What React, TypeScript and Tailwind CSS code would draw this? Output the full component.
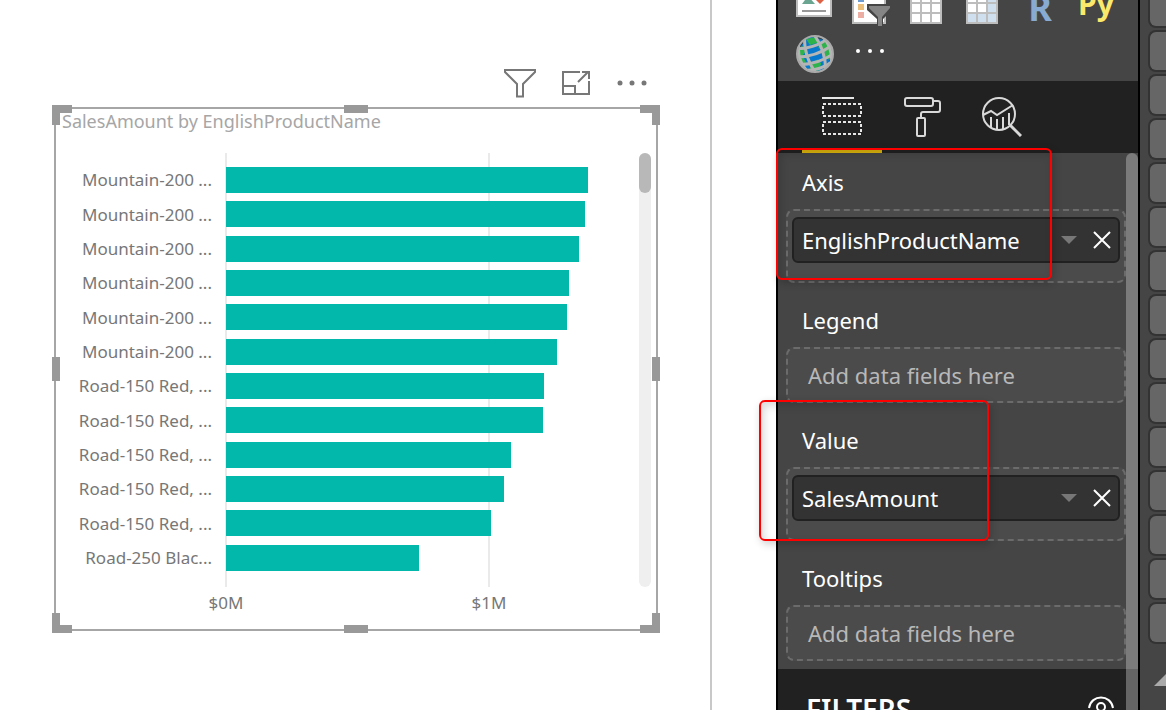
import React from 'react';
import clsx from 'clsx';

const AXIS_MAX = 1.57;

const SALES = [
  { name: 'Mountain-200 ...', amount: 1.376 },
  { name: 'Mountain-200 ...', amount: 1.366 },
  { name: 'Mountain-200 ...', amount: 1.342 },
  { name: 'Mountain-200 ...', amount: 1.304 },
  { name: 'Mountain-200 ...', amount: 1.297 },
  { name: 'Mountain-200 ...', amount: 1.259 },
  { name: 'Road-150 Red, ...', amount: 1.209 },
  { name: 'Road-150 Red, ...', amount: 1.205 },
  { name: 'Road-150 Red, ...', amount: 1.083 },
  { name: 'Road-150 Red, ...', amount: 1.057 },
  { name: 'Road-150 Red, ...', amount: 1.008 },
  { name: 'Road-250 Blac...', amount: 0.735 },
];

const TICKS = [
  { label: '$0M', value: 0 },
  { label: '$1M', value: 1 },
];

const FIELD_CARDS = Array.from({ length: 15 }, (_, i) => i);

const percent = (value: number) => `${(value / AXIS_MAX) * 100}%`;

/* Visual toolbar */

function VisualToolbar() {
  return (
    <div className="flex justify-end gap-6 pr-[10px] mb-2">
      <button type="button" aria-label="Filters" className="size-8">
        <svg viewBox="0 0 32 32" className="size-8" fill="none" stroke="#777" strokeWidth="2">
          <path d="M1 3h30v2L19 17v12.500h-6V17L1 5z" />
        </svg>
      </button>
      <button type="button" aria-label="Focus mode" className="size-8">
        <svg viewBox="0 0 32 32" className="size-8" fill="none" stroke="#777" strokeWidth="2">
          <path d="M20 5H3v22h26V14" />
          <path d="M3 19h12v8M18 15L28 5M22 5h7v7" />
        </svg>
      </button>
      <button type="button" aria-label="More options" className="size-8">
        <svg viewBox="0 0 32 32" className="size-8" fill="#777">
          <circle cx="4" cy="16" r="2.500" />
          <circle cx="16" cy="16" r="2.500" />
          <circle cx="28" cy="16" r="2.500" />
        </svg>
      </button>
    </div>
  );
}

function ResizeHandles() {
  return (
    <>
      <span className="absolute -top-1 -left-1 size-5 border-t-8 border-l-8 border-[#999]" />
      <span className="absolute -top-1 -right-1 size-5 border-t-8 border-r-8 border-[#999]" />
      <span className="absolute -bottom-1 -left-1 size-5 border-b-8 border-l-8 border-[#999]" />
      <span className="absolute -bottom-1 -right-1 size-5 border-b-8 border-r-8 border-[#999]" />
      <span className="absolute -top-1 left-1/2 h-2 w-6 -translate-x-1/2 bg-[#999]" />
      <span className="absolute -bottom-1 left-1/2 h-2 w-6 -translate-x-1/2 bg-[#999]" />
      <span className="absolute -left-1 top-1/2 h-6 w-2 -translate-y-1/2 bg-[#999]" />
      <span className="absolute -right-1 top-1/2 h-6 w-2 -translate-y-1/2 bg-[#999]" />
    </>
  );
}

function BarChart() {
  return (
    <section className="relative border-2 border-[#a6a6a6] pb-3 text-[#777]">
      <h2 className="h-11 pl-[6px] text-lg leading-6 text-[#a6a6a6]">
        SalesAmount by EnglishProductName
      </h2>

      <div className="flex pr-[5px]">
        <div className="flex h-[434px] w-[170px] shrink-0 flex-col pt-[10px] pb-3 pr-[14px] text-right text-[17px]">
          {SALES.map((row, i) => (
            <div key={i} className="flex flex-1 items-center justify-end whitespace-nowrap">{row.name}</div>
          ))}
        </div>

        <div className="relative flex h-[434px] flex-1 flex-col pt-[10px] pb-3">
          {TICKS.map((tick) => (
            <span
              key={tick.label}
              className="absolute inset-y-0 w-[2px] -translate-x-px bg-[#eaeaea]"
              style={{ left: percent(tick.value) }}
            />
          ))}
          {SALES.map((row, i) => (
            <div key={i} className="relative flex flex-1 items-center">
              <div className="h-[26px] bg-[#01b8aa]" style={{ width: percent(row.amount) }} />
            </div>
          ))}
        </div>

        <div className="w-3 rounded-full bg-[#efefef]">
          <div className="h-10 rounded-full bg-[#b8b8b8]" />
        </div>
      </div>

      <div className="relative ml-[170px] mr-[17px] h-[30px]">
        {TICKS.map((tick) => (
          <span
            key={tick.label}
            className="absolute top-1 -translate-x-1/2 text-[17px] leading-6"
            style={{ left: percent(tick.value) }}
          >
            {tick.label}
          </span>
        ))}
      </div>

      <ResizeHandles />
    </section>
  );
}

/* Visual gallery */

function ImageIcon() {
  return (
    <svg viewBox="0 0 40 40" className="size-10">
      <rect x="1" y="1" width="34" height="34" fill="#fff" stroke="#bdbdbd" strokeWidth="2" />
      <path d="M6 23l6-8 7 8z" fill="#6aa591" />
      <path d="M24 11l6 6-6 6-6-6z" fill="#dc6144" />
      <path d="M6 30h24" stroke="#999" strokeWidth="2" />
    </svg>
  );
}

function SlicerIcon() {
  return (
    <svg viewBox="0 0 40 40" className="size-10">
      <rect x="1" y="1" width="32" height="35" fill="#fff" stroke="#bdbdbd" strokeWidth="2" />
      <rect x="6" y="9" width="6" height="6" fill="#6c9bd1" />
      <rect x="6" y="17" width="6" height="6" fill="#ecc07a" />
      <rect x="6" y="25" width="6" height="6" fill="#ecaea2" />
      <path d="M15 17h25v6l-9 9v8h-6v-8l-10-9z" fill="#454545" />
      <path d="M17 19h21v2l-8 9v9h-4v-9l-9-9z" fill="#858585" />
    </svg>
  );
}

function GridIcon({ tinted = false }: { tinted?: boolean }) {
  const tint = tinted ? '#d0dfee' : '#fff';
  return (
    <svg viewBox="0 0 40 40" className="size-10">
      <rect x="2" y="1" width="32" height="37" fill="#fff" />
      <path d="M24 1h10v37H24zM2 28h32v10H2z" fill={tint} />
      <path d="M3 1h30v36H3zM13 1v36M23 1v36M3 17h30M3 27h30" fill="none" stroke="#bdbdbd" strokeWidth="2" />
    </svg>
  );
}

function GlobeIcon() {
  return (
    <svg viewBox="0 0 40 40" className="size-10">
      <defs>
        <clipPath id="globe">
          <circle cx="19" cy="20" r="18" />
        </clipPath>
      </defs>
      <g clipPath="url(#globe)">
        <g transform="rotate(-18 19 20)">
          <rect x="-2" y="-2" width="44" height="44" fill="#0878cc" />
          <path d="M1 8l9 1 1 6-5 3 2 6-3 5-6-3zM15 3l10 1v6h-8zM28 10l8 1 4 12-8 7-6-3 3-7-5-5zM12 27l8-1 2 5-5 6-8-3z" fill="#2eb34b" />
          <path d="M2 4l10-6-1 8-8 6zM27 1l8 4-2 5-7-4zM33 28l6 3-9 9-4-3z" fill="#3a4147" />
          <g fill="none" stroke="#b5b5b5" strokeWidth="3">
            <path d="M14 1c-4 12-4 26 0 38M24 1c4 12 4 26 0 38M7 5c-5 9-5 21 0 30M31 5c5 9 5 21 0 30" />
            <path d="M2 9c10 4 24 4 34 0M0 17c12 4 26 4 38 0M0 25c12 4 26 4 38 0M4 32c9 4 21 4 30 0" />
          </g>
        </g>
      </g>
      <circle cx="19" cy="20" r="18" fill="none" stroke="#aaa" strokeWidth="2" />
    </svg>
  );
}

function VisualGallery() {
  return (
    <div className="flex h-[81px] shrink-0 flex-col justify-end overflow-hidden pb-[7px] pl-[18px]">
      <div className="grid grid-cols-[repeat(6,40px)] gap-x-4 gap-y-[6px]">
        <button type="button" aria-label="Image" className="pb-[6px]"><ImageIcon /></button>
        <button type="button" aria-label="Slicer" className="pt-[6px]"><SlicerIcon /></button>
        <button type="button" aria-label="Table" className="pt-1"><GridIcon /></button>
        <button type="button" aria-label="Matrix" className="pt-1"><GridIcon tinted /></button>
        <button type="button" className="pt-2 text-4xl leading-10 font-bold text-[#87abd3]">R</button>
        <button type="button" className="text-3xl leading-10 font-bold text-[#fbe96b]">Py</button>
        <button type="button" aria-label="ArcGIS map"><GlobeIcon /></button>
        <button type="button" aria-label="More visuals">
          <svg viewBox="0 0 40 40" className="size-10" fill="#fff">
            <circle cx="6" cy="17" r="2" />
            <circle cx="18" cy="17" r="2" />
            <circle cx="30" cy="17" r="2" />
          </svg>
        </button>
      </div>
    </div>
  );
}

/* Pane tabs */

function FieldsIcon() {
  return (
    <svg viewBox="0 0 40 40" className="size-10" fill="none" stroke="#e6e6e6" strokeWidth="2">
      <path d="M0 1h32" />
      <path d="M1 7h38v12H1zM1 25h38v12H1z" strokeDasharray="3 2" />
    </svg>
  );
}

function FormatIcon() {
  return (
    <svg viewBox="0 0 40 40" className="size-10" fill="none" stroke="#d9d9d9" strokeWidth="2">
      <rect x="3" y="1" width="28" height="8" rx="2" />
      <path d="M31 4h5q2 0 2 2v7q0 2-2 2H21q-2 0-2 2v4" />
      <rect x="15" y="21" width="8" height="18" rx="1" />
    </svg>
  );
}

function AnalyticsIcon() {
  return (
    <svg viewBox="0 0 40 40" className="size-10" fill="none" stroke="#d9d9d9" strokeWidth="2">
      <circle cx="17" cy="17" r="16" />
      <path d="M1 18l8-4 6 4L31 8" />
      <path d="M9 20v10M15 22v11M21 20v12M27 16v12" />
      <path d="M28 28l11 11" strokeWidth="3" />
    </svg>
  );
}

const TABS = [
  { label: 'Fields', icon: <FieldsIcon />, active: true },
  { label: 'Format', icon: <FormatIcon />, active: false },
  { label: 'Analytics', icon: <AnalyticsIcon />, active: false },
];

function PaneTabs() {
  return (
    <nav className="flex shrink-0 bg-[#212121] pl-6">
      {TABS.map((tab) => (
        <button
          key={tab.label}
          type="button"
          aria-label={tab.label}
          className={clsx(
            'flex h-[72px] w-20 justify-center border-b-4 pt-4',
            tab.active ? 'border-[#dcb50d]' : 'border-transparent'
          )}
        >
          {tab.icon}
        </button>
      ))}
    </nav>
  );
}

/* Field wells */

interface FieldWellProps {
  label: string;
  field?: string;
  children?: React.ReactNode;
}

function FieldWell({ label, field, children }: FieldWellProps) {
  return (
    <section className="relative pb-2">
      <h3 className="flex h-14 items-center pt-[2px] pl-6 text-[22px] text-white">{label}</h3>
      <div
        className={clsx(
          'ml-2 mr-3 rounded-lg border-2 border-dashed border-[#6b6b6b] bg-[#4b4b4b]',
          field ? 'px-1 pt-[6px] pb-[18px]' : 'flex h-14 items-center pl-5'
        )}
      >
        {field ? (
          <div className="flex h-[46px] items-center rounded-md border-2 border-[#212121] bg-[#333] pl-2">
            <span className="flex-1 text-[22px] text-white">{field}</span>
            <button type="button" aria-label={`${field} options`} className="mr-4">
              <svg viewBox="0 0 16 10" className="h-[10px] w-4" fill="#777">
                <path d="M0 1h16L8 9z" />
              </svg>
            </button>
            <button type="button" aria-label={`Remove ${field}`} className="mr-[7px]">
              <svg viewBox="0 0 18 18" className="size-[18px]" fill="none" stroke="#fff" strokeWidth="2">
                <path d="M1 1l16 16M17 1L1 17" />
              </svg>
            </button>
          </div>
        ) : (
          <span className="text-[22px] text-[#b8b8b8]">Add data fields here</span>
        )}
      </div>
      {children}
    </section>
  );
}

function Highlight({ className }: { className: string }) {
  return (
    <div
      className={clsx(
        'pointer-events-none absolute z-10 rounded-md border-2 border-[#ff0000] shadow-[2px_3px_8px_rgba(0,0,0,0.2),inset_3px_4px_8px_rgba(0,0,0,0.15)]',
        className
      )}
    />
  );
}

function VisualizationsPane() {
  return (
    <aside className="flex w-[364px] shrink-0 flex-col border-x-2 border-black bg-[#454545]">
      <VisualGallery />
      <PaneTabs />

      <div className="relative flex-1">
        <FieldWell label="Axis" field="EnglishProductName">
          <Highlight className="-top-[5px] -left-[2px] h-[132px] w-[276px]" />
        </FieldWell>
        <FieldWell label="Legend" />
        <FieldWell label="Value" field="SalesAmount">
          <Highlight className="-top-[11px] -left-[19px] h-[141px] w-[230px]" />
        </FieldWell>
        <FieldWell label="Tooltips" />

        <div className="flex h-20 items-center justify-between bg-[#212121] pr-6 pl-7 text-white">
          <h3 className="text-[28px] font-semibold">FILTERS</h3>
          <svg viewBox="0 0 26 26" className="size-[26px]" fill="none" stroke="#fff" strokeWidth="2">
            <path d="M1 12c2-14 22-14 24 0" />
            <circle cx="13" cy="11" r="4" />
          </svg>
        </div>

        <div className="absolute inset-y-0 right-0 w-3 rounded-t-full bg-[#cdcdcd]/40" />
      </div>
    </aside>
  );
}

function FieldsStrip() {
  return (
    <aside className="w-[26px] shrink-0 overflow-hidden bg-[#454545] pl-2">
      <div className="-mt-[14px] flex flex-col gap-[2px]">
        {FIELD_CARDS.map((i) => (
          <div key={i} className="h-[42px] rounded-l-lg border-2 border-r-0 border-[#333] bg-[#666]" />
        ))}
      </div>
      <svg viewBox="0 0 12 12" className="mt-[30px] ml-auto size-3" fill="#aaa">
        <path d="M0 12L12 0v12z" />
      </svg>
    </aside>
  );
}

export default function App() {
  return (
    <div className="flex h-screen overflow-hidden bg-white font-['Noto_Sans',sans-serif]">
      <main className="flex-1 border-r-2 border-[#c8c8c8] pt-[67px] pr-[52px] pl-[54px]">
        <VisualToolbar />
        <BarChart />
      </main>
      <div className="w-16 shrink-0" />
      <VisualizationsPane />
      <FieldsStrip />
    </div>
  );
}
